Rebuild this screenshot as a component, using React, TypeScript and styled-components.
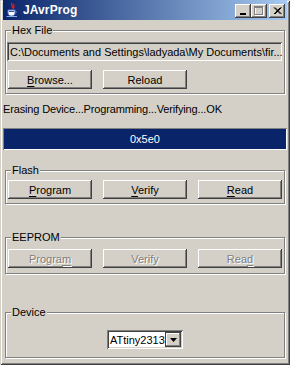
import React from 'react';
import styled, { createGlobalStyle } from 'styled-components';

const GlobalStyle = createGlobalStyle`
  html, body {
    margin: 0;
    padding: 0;
    background: #d4d0c8;
  }
  body {
    font-family: "Liberation Sans", Arial, sans-serif;
    font-size: 11px;
  }
`;

const Window = styled.div`
  width: 290px;
  height: 365px;
  box-sizing: border-box;
  padding: 0 3px 3px 3px;
  background: #d4d0c8;
  box-shadow: inset 1px 1px #d4d0c8, inset -1px -1px #404040,
    inset 2px 2px #ffffff, inset -2px -2px #808080;
  display: flex;
  flex-direction: column;
  overflow: hidden;
`;

const TitleBar = styled.div`
  height: 20px;
  flex-shrink: 0;
  display: flex;
  align-items: center;
  padding: 0 2px 0 2px;
  background: linear-gradient(to right, #0a246a, #a6caf0);
`;

const TitleText = styled.span`
  flex: 1;
  margin-left: 4px;
  color: #ffffff;
  font-weight: bold;
  font-size: 12px;
  letter-spacing: 0.1px;
`;

const CaptionButtons = styled.div`
  display: flex;
  align-items: center;
  margin-top: 1px;
`;

const CaptionButton = styled.div<{ $gapLeft?: number }>`
  width: 16px;
  height: 14px;
  margin-left: ${p => p.$gapLeft ?? 0}px;
  background: #d4d0c8;
  box-shadow: inset -1px -1px #404040, inset 1px 1px #ffffff,
    inset -2px -2px #808080;
  display: flex;
  align-items: center;
  justify-content: center;
`;

const Content = styled.div`
  display: flex;
  flex-direction: column;
  flex: 1;
`;

const GroupBox = styled.div<{ $top: number; $padTop: number; $padBottom: number }>`
  position: relative;
  margin: ${p => p.$top}px 2px 0 2px;
  padding: ${p => p.$padTop}px 2px ${p => p.$padBottom}px 2px;
  border: 1px solid #808080;
  box-shadow: inset 1px 1px #ffffff, 1px 1px #ffffff;
`;

const GroupTitle = styled.span`
  position: absolute;
  top: -7px;
  left: 5px;
  padding: 0 1px;
  line-height: 13px;
  background: #d4d0c8;
  color: #000;
`;

const TextField = styled.div`
  height: 19px;
  box-sizing: border-box;
  margin: 0 0 0 -1px;
  padding: 0 0 0 3px;
  display: flex;
  align-items: center;
  background: #d4d0c8;
  color: #000;
  white-space: nowrap;
  overflow: hidden;
  box-shadow: inset 1px 1px #808080, inset -1px -1px #ffffff,
    inset 2px 2px #404040, inset -2px -2px #d4d0c8;
`;

const ButtonRow = styled.div<{ $top?: number }>`
  display: grid;
  grid-template-columns: repeat(3, 1fr);
  column-gap: 11px;
  margin-top: ${p => p.$top ?? 0}px;
`;

const Button = styled.button`
  height: 19px;
  padding: 0;
  border: none;
  background: #d4d0c8;
  font-family: "Liberation Sans", Arial, sans-serif;
  font-size: 11px;
  color: #000;
  box-shadow: inset -1px -1px #404040, inset 1px 1px #ffffff,
    inset -2px -2px #808080;

  &:disabled {
    color: #808080;
    text-shadow: 1px 1px #ffffff;
  }
`;

const Mn = styled.span`
  text-decoration: underline;
  text-underline-offset: 2px;
`;

const StatusText = styled.div`
  margin: 8px 0 0 0;
  line-height: 14px;
  color: #000;
  letter-spacing: -0.15px;
  white-space: nowrap;
`;

const ProgressBar = styled.div`
  margin: 12px 0 0 0;
  height: 22px;
  box-sizing: border-box;
  background: #0a246a;
  color: #ffffff;
  display: flex;
  align-items: center;
  justify-content: center;
  box-shadow: inset 1px 1px #808080, inset -1px -1px #ffffff;
`;

const Centered = styled.div`
  display: flex;
  justify-content: center;
`;

const Combo = styled.div`
  display: flex;
  width: 76px;
  height: 19px;
  box-sizing: border-box;
  padding: 2px;
  background: #ffffff;
  box-shadow: inset 1px 1px #808080, inset -1px -1px #ffffff,
    inset 2px 2px #404040, inset -2px -2px #d4d0c8;
`;

const ComboText = styled.div`
  flex: 1;
  display: flex;
  align-items: center;
  padding-left: 1px;
  color: #000;
  white-space: nowrap;
  overflow: hidden;
`;

const ComboArrow = styled.div`
  width: 16px;
  box-sizing: border-box;
  border: 1px solid #404040;
  background: #d4d0c8;
  box-shadow: inset -1px -1px #808080, inset 1px 1px #ffffff;
  display: flex;
  align-items: center;
  justify-content: center;
`;

const JavaIcon = () => (
  <svg width="14" height="16" viewBox="0 0 14 16">
    <path d="M7 1 C5 3 9 4 7 6 M9 2 C8 4 10 5 8 7" stroke="#e02020" strokeWidth="1.3" fill="none" />
    <path d="M3 8 H10 V11 C10 13 8 14 6.5 14 C5 14 3 13 3 11 Z" fill="#ffffff" stroke="#5a78c8" strokeWidth="1" />
    <path d="M10 9 C12 9 12 11 10 11.5" stroke="#5a78c8" strokeWidth="1" fill="none" />
    <path d="M1.5 14.5 H12" stroke="#8aa8e8" strokeWidth="1" />
    <path d="M4 9.5 H9" stroke="#3050a0" strokeWidth="1" />
  </svg>
);

const App: React.FC = () => {
  return (
    <>
      <GlobalStyle />
      <Window>
        <TitleBar>
          <JavaIcon />
          <TitleText>JAvrProg</TitleText>
          <CaptionButtons>
            <CaptionButton>
              <svg width="8" height="8" viewBox="0 0 8 8">
                <rect x="1" y="6" width="6" height="2" fill="#000" />
              </svg>
            </CaptionButton>
            <CaptionButton>
              <svg width="10" height="10" viewBox="0 0 10 10">
                <rect x="1.5" y="1.5" width="8" height="8" fill="none" stroke="#ffffff" />
                <rect x="0.5" y="0.5" width="8" height="8" fill="none" stroke="#808080" />
                <rect x="1" y="1" width="7" height="1" fill="#808080" />
              </svg>
            </CaptionButton>
            <CaptionButton $gapLeft={2}>
              <svg width="9" height="8" viewBox="0 0 9 8">
                <path d="M1 0.5 L7.5 7 M2 0.5 L8.5 7 M7.5 0.5 L1 7 M8.5 0.5 L2 7" stroke="#000" strokeWidth="1" />
              </svg>
            </CaptionButton>
          </CaptionButtons>
        </TitleBar>

        <Content>
          <GroupBox $top={10} $padTop={11} $padBottom={4}>
            <GroupTitle>Hex File</GroupTitle>
            <TextField>C:\Documents and Settings\ladyada\My Documents\fir...</TextField>
            <ButtonRow $top={9}>
              <Button><Mn>B</Mn>rowse...</Button>
              <Button>Reload</Button>
            </ButtonRow>
          </GroupBox>

          <StatusText>Erasing Device...Programming...Verifying...OK</StatusText>

          <ProgressBar>0x5e0</ProgressBar>

          <GroupBox $top={20} $padTop={9} $padBottom={4}>
            <GroupTitle>Flash</GroupTitle>
            <ButtonRow>
              <Button><Mn>P</Mn>rogram</Button>
              <Button><Mn>V</Mn>erify</Button>
              <Button><Mn>R</Mn>ead</Button>
            </ButtonRow>
          </GroupBox>

          <GroupBox $top={33} $padTop={11} $padBottom={5}>
            <GroupTitle>EEPROM</GroupTitle>
            <ButtonRow>
              <Button disabled>Progra<Mn>m</Mn></Button>
              <Button disabled>Verify</Button>
              <Button disabled>Rea<Mn>d</Mn></Button>
            </ButtonRow>
          </GroupBox>

          <GroupBox $top={38} $padTop={17} $padBottom={8}>
            <GroupTitle>Device</GroupTitle>
            <Centered>
              <Combo>
                <ComboText>ATtiny2313</ComboText>
                <ComboArrow>
                  <svg width="7" height="4" viewBox="0 0 7 4">
                    <path d="M0 0 H7 L3.5 4 Z" fill="#000" />
                  </svg>
                </ComboArrow>
              </Combo>
            </Centered>
          </GroupBox>
        </Content>
      </Window>
    </>
  );
};

export default App;
